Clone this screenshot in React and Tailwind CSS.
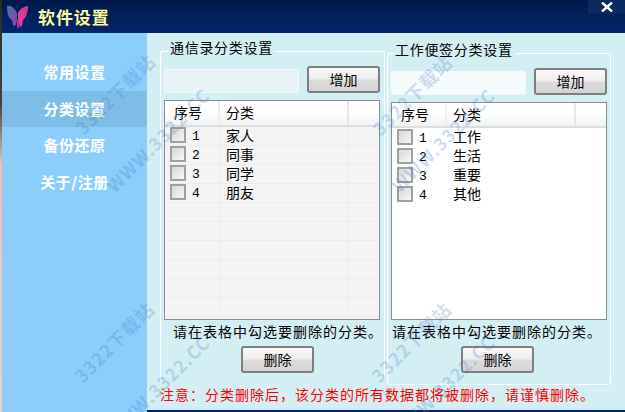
import React from 'react';

const cjk = 'font-["Noto_Sans_CJK_SC","Liberation_Sans",sans-serif]';

const navItems = ['常用设置', '分类设置', '备份还原', '关于/注册'];

const watermarks = [
    { text: '3322下载站', cls: 'left-[115px] top-[94px]' },
    { text: '3322下载站', cls: 'left-[412px] top-[95px]' },
    { text: '3322下载站', cls: 'left-[114px] top-[342px]' },
    { text: '3322下载站', cls: 'left-[411px] top-[342px]' },
    { text: 'WWW.3322.CC', cls: 'left-[158px] top-[140px]' },
    { text: 'WWW.3322.CC', cls: 'left-[443px] top-[140px]' },
    { text: 'WWW.3322.CC', cls: 'left-[158px] top-[387px]' },
    { text: 'WWW.3322.CC', cls: 'left-[443px] top-[387px]' },
];

const Butterfly = () => (
    <svg width="24" height="24" viewBox="0 0 24 24" className="shrink-0">
        <defs>
            <linearGradient id="wingL" x1="0" y1="0" x2="1" y2="1">
                <stop offset="0" stopColor="#3f78b8" />
                <stop offset="1" stopColor="#8a3fa0" />
            </linearGradient>
            <linearGradient id="wingR" x1="1" y1="0" x2="0" y2="1">
                <stop offset="0" stopColor="#c4389c" />
                <stop offset="1" stopColor="#f03f90" />
            </linearGradient>
        </defs>
        <path d="M1 1 C5 0 9 4 11 8 L11 15 L10 20 L7 21 L6 15 C3 14 1 9 1 1 Z" fill="url(#wingL)" />
        <path d="M22 1 C18 1 14 4 12 8 L12 15 L14 22 L16 21 L17 15 C20 13 22 8 22 1 Z" fill="url(#wingR)" />
        <path d="M11 15 L13 15 L13 23 L11 23 Z" fill="#b52c8c" />
    </svg>
);

const Btn = ({ label, className }) => (
    <button className={`w-[73px] h-[27px] shrink-0 rounded-[3px] border-2 border-[#7d7f80] bg-[linear-gradient(#fafafa_0%,#ededed_48%,#dcdcdc_52%,#d4d4d4_100%)] text-[14px] text-black ${className}`}>
        {label}
    </button>
);

const CategoryTable = ({ rows, tableCls, headCls, striped }) => (
    <div className={`w-[216px] mt-[7px] border border-[#868d94] overflow-hidden ${tableCls}`}>
        <div className={`flex border-b-2 border-[#d9dee1] bg-[linear-gradient(#ffffff_0%,#ffffff_45%,#f0f2f3_100%)] text-[14px] ${headCls}`}>
            <div className="w-[55px] pl-[9px] pb-[1px] flex items-center border-r-2 border-[#eceef0]">序号</div>
            <div className="w-[129px] pl-[6px] pb-[1px] flex items-center border-r-2 border-[#e4e6e8]">分类</div>
            <div className="flex-1" />
        </div>
        {rows.map((row, i) => (
            <div key={i} className={`flex h-[19px] items-center text-[14px] ${striped ? 'border-b border-[#ececec]' : ''}`}>
                <div className={`w-[55px] h-full flex items-center pl-[5px] pb-[2px] ${striped ? 'border-r border-[#ececec]' : ''}`}>
                    {row && (
                        <>
                            <span className="w-[16px] h-[16px] border-2 border-[#a0a0a0] bg-[linear-gradient(135deg,#d8d8d8,#f6f6f6)]" />
                            <span className='ml-[6px] mt-[3px] leading-none font-["Liberation_Mono",monospace] text-[13px]'>{row[0]}</span>
                        </>
                    )}
                </div>
                <div className={`w-[129px] h-full flex items-center pl-[6px] pb-[2px] ${striped ? 'border-r border-[#ececec]' : ''}`}>
                    {row && row[1]}
                </div>
            </div>
        ))}
    </div>
);

const Group = ({ title, boxCls, legendCls, inputCls, rows, tableCls, headCls, striped, hintCls, delCls }) => (
    <fieldset className={`min-w-0 shrink-0 border border-white rounded-[3px] px-[3px] ${boxCls}`}>
        <legend className={`h-[26px] pb-[8px] px-[2px] flex items-center text-[14px] tracking-[0.7px] ${legendCls}`}>{title}</legend>
        <div className="mt-[2px] flex items-end">
            <div className={`w-[135px] h-[24px] rounded-[2px] border border-[#f3fafb] ${inputCls}`} />
            <Btn label="增加" className="ml-[8px]" />
        </div>
        <CategoryTable rows={rows} tableCls={tableCls} headCls={headCls} striped={striped} />
        <p className={`mt-[3px] h-[18px] leading-[17px] whitespace-nowrap text-[14px] tracking-[1px] ${hintCls}`}>请在表格中勾选要删除的分类。</p>
        <Btn label="删除" className={`mt-[5px] block ${delCls}`} />
    </fieldset>
);

const contactRows = [['1', '家人'], ['2', '同事'], ['3', '同学'], ['4', '朋友'], null, null, null, null, null, null];
const noteRows = [['1', '工作'], ['2', '生活'], ['3', '重要'], ['4', '其他']];

export default function App() {
    return (
        <div className={`relative w-[625px] h-[412px] flex overflow-hidden bg-[#d4eff3] text-black ${cjk}`}>
            <div className="w-[2px] shrink-0 bg-[linear-gradient(#20302a_0%,#4a3f35_25%,#e8c6ae_40%,#f1d0bc_100%)]" />
            <div className="flex-1 flex flex-col min-w-0">
                <div className="h-[33px] shrink-0 flex items-center pl-[4px] bg-[linear-gradient(#01174a_0%,#02225f_60%,#03256d_100%)]">
                    <Butterfly />
                    <span className="ml-[8px] text-[17px] font-bold tracking-[0.9px] text-[#fdfd9a]">软件设置</span>
                    <div className="ml-auto self-start w-[37px] h-[14px] bg-[#0d2a5e] flex items-center justify-center">
                        <svg width="12" height="10" viewBox="0 0 12 10">
                            <path d="M1 0.5 L11 9.5 M11 0.5 L1 9.5" stroke="#ffffff" strokeWidth="2.4" />
                        </svg>
                    </div>
                </div>
                <div className="flex-1 flex min-h-0">
                    <nav className="w-[145px] shrink-0 pt-[21px] bg-[#8bcdfb]">
                        {navItems.map((item, i) => (
                            <div key={item} className={`h-[36.5px] flex items-center justify-center text-[15px] font-bold tracking-[0.5px] text-white ${i === 1 ? 'bg-[#7ebde6]' : ''}`}>
                                {item}
                            </div>
                        ))}
                    </nav>
                    <main className="flex-1 flex flex-col min-w-0">
                        <div className="h-[351px] shrink-0 flex items-start pl-[13px] pt-[5px] gap-[2px]">
                            <Group
                                title="通信录分类设置"
                                boxCls="w-[225px] h-[343px] border-b-0"
                                legendCls="ml-[4px]"
                                inputCls="bg-[#e9f3f5]"
                                rows={contactRows}
                                tableCls="h-[220px] bg-[#f4f4f4]"
                                headCls="h-[26px]"
                                striped
                                hintCls="pl-[9px]"
                                delCls="ml-[77px]"
                            />
                            <Group
                                title="工作便签分类设置"
                                boxCls="w-[224px] h-[345px] mt-[2px]"
                                legendCls="ml-[2px]"
                                inputCls="bg-[#f6fbfc]"
                                rows={noteRows}
                                tableCls="h-[218px] bg-white"
                                headCls="h-[25px]"
                                hintCls="pl-[1px]"
                                delCls="ml-[70px]"
                            />
                        </div>
                        <p className="ml-[13px] h-[20px] leading-[20px] whitespace-nowrap text-[14px] tracking-[1px] text-[#ff0000]">
                            注意：分类删除后，该分类的所有数据都将被删除，请谨慎删除。
                        </p>
                        <div className="mt-auto h-[2px] bg-[#03256d]" />
                    </main>
                </div>
            </div>
            {watermarks.map((w, i) => (
                <span
                    key={i}
                    className={`absolute ${w.cls} -translate-x-1/2 -translate-y-1/2 -rotate-[45deg] whitespace-nowrap pointer-events-none text-[18px] font-bold tracking-[1px] text-[#4a78c8]/25`}
                >
                    {w.text}
                </span>
            ))}
        </div>
    );
}
